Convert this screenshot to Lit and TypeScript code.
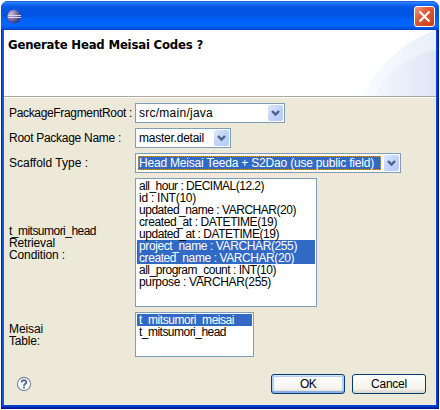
import { LitElement, html, css } from "lit";
import { customElement, property } from "lit/decorators.js";

/* A line of text whose tracking is adjusted to fill a given width. */
@customElement("fit-text")
class FitText extends LitElement {
  @property() text = "";
  @property({ type: Number }) width = 0;
  static styles = css`
    :host { display: inline-block; white-space: pre; }
    span { display: inline-block; }
  `;
  render() {
    return html`<span>${this.text}</span>`;
  }
  updated() {
    const s = this.renderRoot.querySelector("span") as HTMLElement;
    s.style.letterSpacing = "0";
    const natural = s.getBoundingClientRect().width;
    s.style.letterSpacing = (this.width - natural) / this.text.length + "px";
  }
}

@customElement("combo-box")
class ComboBox extends LitElement {
  @property() text = "";
  @property({ type: Number }) textWidth = 0;
  @property({ type: Boolean, reflect: true }) focused = false;
  static styles = css`
    :host { display: flex; box-sizing: border-box; height: 20px; border: 1px solid #7f9db9; background: #fff; padding: 1px; }
    .value { flex: 1; margin: 1px 3px 1px 1px; padding-left: 1px; line-height: 14px; border: 0; }
    :host([focused]) .value { background: #316ac5; color: #fff; outline: 1px dotted #e0a040; outline-offset: -1px; }
    .drop { width: 15px; height: 16px; border-radius: 2px; background: linear-gradient(135deg, #dfe8fe, #c1d3fb 50%, #b5c9f3); }
    svg { display: block; }
  `;
  render() {
    return html`<div class="value"><fit-text .text=${this.text} .width=${this.textWidth}></fit-text></div>
      <div class="drop"><svg width="15" height="16"><path d="M4 6l3.500 3.500L11 6" fill="none" stroke="#4d6185" stroke-width="2.400"/></svg></div>`;
  }
}

type Line = [string, number, boolean?];

@customElement("app-root")
class AppRoot extends LitElement {
  static styles = css`
    :host { display: block; width: 440px; height: 410px; overflow: hidden; background: #fff; font: 12px/12px "Liberation Sans", "Noto Sans CJK JP", sans-serif; color: #000; }
    .window { box-sizing: border-box; width: 438px; height: 408px; margin: 1px; display: flex; flex-direction: column; border-radius: 7px 7px 0 0; overflow: hidden; background: linear-gradient(90deg, #0019cf, #0831d9 1px, #166aee 2px, #0855dd 3px, #0855dd 435px, #0441d8 436px, #001ea0 437px, #00138c); }
    .bar { height: 29px; box-sizing: border-box; flex: none; display: flex; align-items: center; justify-content: space-between; padding: 1px 4px 0 6px; background: linear-gradient(#0a3bbf 0, #2f8bff 1px, #1a6ef5 3px, #0455e4 6px, #0053e1 14px, #0060f8 19px, #0266fe 25px, #0054e4 27px, #003fc8 29px); }
    .bar svg { display: block; }
    .client { flex: 1; margin: 0 3px; display: flex; flex-direction: column; background: #ece9d8; border-bottom: 1px solid #0046d5; }
    .foot { height: 3px; background: linear-gradient(#0841d8, #001ea0 60%, #00138c); }
    .header { height: 66px; background: #fff; display: flex; justify-content: space-between; flex: none; border-bottom: 1px solid #aca899; box-shadow: 0 1px #fff; }
    h1 { margin: 7px 0 0 4px; font: bold 13px/15px "DejaVu Sans", sans-serif; font-stretch: condensed; }
    .form { display: grid; grid-template-columns: 126px max-content; row-gap: 5px; padding: 6px 0 0 5px; align-items: center; justify-items: start; }
    .label { display: flex; flex-direction: column; }
    .w150 { width: 150px; } .w96 { width: 96px; } .w266 { width: 266px; }
    .list { box-sizing: border-box; border: 1px solid #7f9db9; background: #fff; padding: 1px; }
    .tall { width: 182px; height: 129px; }
    .short { width: 119px; height: 45px; }
    .row { height: 12px; line-height: 12px; padding-left: 2px; }
    .sel { background: #316ac5; color: #fff; }
    .actions { display: flex; align-items: center; margin: 17px 10px 0 12px; gap: 7px; }
    .help { margin-right: auto; display: block; }
    button { box-sizing: border-box; width: 74px; height: 20px; padding: 0; border: 1px solid #003c74; border-radius: 3px; background: linear-gradient(#fff, #f4f3ee 75%, #d8d2c6); font: inherit; color: inherit; }
    .default { box-shadow: inset 0 1px #cee7ff, inset 0 -2px #89ade4, inset 0 0 0 2px #b4cdf5; }
  `;
  lines(items: Line[]) {
    return items.map(([t, w, s]) => html`<div class="row ${s ? "sel" : ""}"><fit-text .text=${t} .width=${w}></fit-text></div>`);
  }
  label(items: Line[]) {
    return html`<div class="label">${items.map(([t, w]) => html`<fit-text .text=${t} .width=${w}></fit-text>`)}</div>`;
  }
  render() {
    return html`<div class="window">
      <div class="bar">
        <svg width="15" height="15" viewBox="0 0 15 15"><defs><radialGradient id="g" cx=".3" cy=".3" r=".8"><stop offset="0" stop-color="#c8b8d4"/><stop offset=".5" stop-color="#8070a8"/><stop offset="1" stop-color="#30286c"/></radialGradient></defs><circle cx="7" cy="7.5" r="6.7" fill="url(#g)"/><path d="M1 6.500h13M1 8.500h13" stroke="#d8d8f0"/></svg>
        <svg width="21" height="21" viewBox="0 0 21 21"><defs><linearGradient id="r" x2="1" y2="1"><stop offset="0" stop-color="#f0a088"/><stop offset=".4" stop-color="#e05a38"/><stop offset="1" stop-color="#c83c10"/></linearGradient></defs><rect x=".5" y=".5" width="20" height="20" rx="2.5" fill="url(#r)" stroke="#fff"/><path d="M5.500 5.500l10 10M15.500 5.500l-10 10" stroke="#fff" stroke-width="2.2"/></svg>
      </div>
      <div class="client">
        <div class="header">
          <h1><fit-text .text=${"Generate Head Meisai Codes ?"} .width=${195}></fit-text></h1>
          <svg width="75" height="66"><defs><linearGradient id="a"><stop offset="0" stop-color="#fafcff"/><stop offset="1" stop-color="#e8eff9"/></linearGradient><linearGradient id="b"><stop offset="0" stop-color="#f3f7fd"/><stop offset="1" stop-color="#e0e5f5"/></linearGradient></defs><path d="M1 66C15 38 43 10 75 0V66Z" fill="url(#a)"/><path d="M14 66C24 42 47 25 75 21V66Z" fill="url(#b)"/></svg>
        </div>
        <div class="form">
          ${this.label([["PackageFragmentRoot :", 123]])}
          <combo-box class="w150" .text=${"src/main/java"} .textWidth=${74}></combo-box>
          ${this.label([["Root Package Name :", 112]])}
          <combo-box class="w96" .text=${"master.detail"} .textWidth=${65}></combo-box>
          ${this.label([["Scaffold Type :", 79]])}
          <combo-box class="w266" focused .text=${"Head Meisai Teeda + S2Dao (use public field)"} .textWidth=${235}></combo-box>
          ${this.label([["t_mitsumori_head", 87], ["Retrieval", 46], ["Condition :", 56]])}
          <div class="list tall">${this.lines([
            ["all_hour : DECIMAL(12.2)", 125],
            ["id : INT(10)", 57],
            ["updated_name : VARCHAR(20)", 157],
            ["created_at : DATETIME(19)", 138],
            ["updated_at : DATETIME(19)", 140],
            ["project_name : VARCHAR(255)", 158, true],
            ["created_name : VARCHAR(20)", 155, true],
            ["all_program_count : INT(10)", 137],
            ["purpose : VARCHAR(255)", 132],
          ])}</div>
          ${this.label([["Meisai", 34], ["Table:", 31]])}
          <div class="list short">${this.lines([["t_mitsumori_meisai", 95, true], ["t_mitsumori_head", 87]])}</div>
        </div>
        <div class="actions">
          <svg class="help" width="16" height="16" viewBox="0 0 16 16"><circle cx="8" cy="8" r="6.6" fill="#fff" stroke="#7488a4" stroke-width="1.1"/><path d="M5.700 6.500C5.700 3.500 10.400 3.600 10.400 6.200C10.400 7.800 8 7.800 8 9.700M8 10.600v1.800" fill="none" stroke="#50698c" stroke-width="1.8"/></svg>
          <button class="default"><fit-text .text=${"OK"} .width=${16}></fit-text></button>
          <button><fit-text .text=${"Cancel"} .width=${36}></fit-text></button>
        </div>
      </div>
      <div class="foot"></div>
    </div>`;
  }
}
